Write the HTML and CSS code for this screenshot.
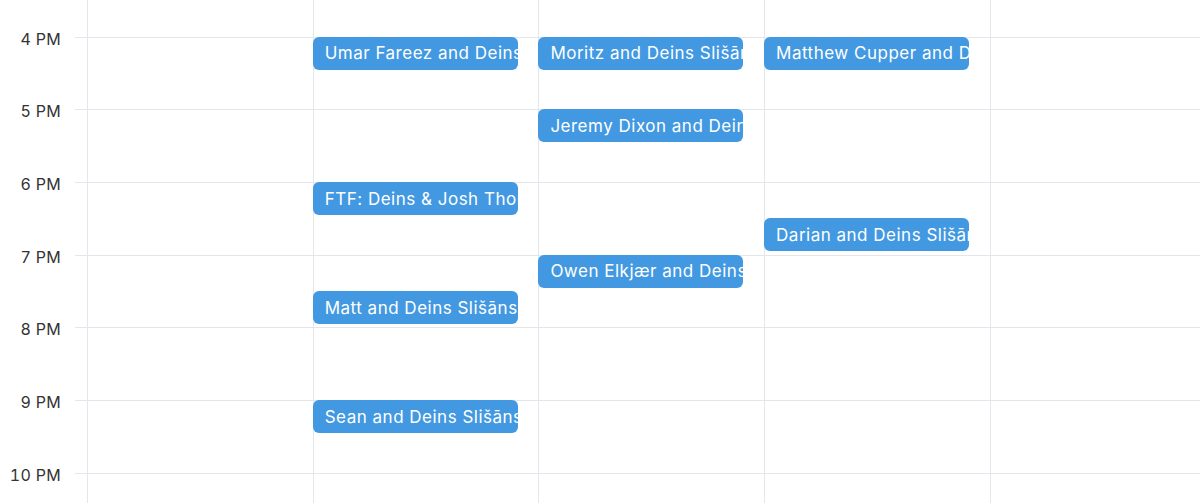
FILE: index.html
```html
<!DOCTYPE html>
<html lang="en">
<head>
    <meta charset="UTF-8">
    <meta name="viewport" content="width=device-width, initial-scale=1.0">
    <title>Week view</title>
    <link rel="stylesheet" href="styles.css">
</head>
<body>
    <div class="calendar">
        <div class="hours">
            <div class="hour"><span class="label">3 PM</span><span class="line"></span></div>
            <div class="hour"><span class="label">4 PM</span><span class="line"></span></div>
            <div class="hour"><span class="label">5 PM</span><span class="line"></span></div>
            <div class="hour"><span class="label">6 PM</span><span class="line"></span></div>
            <div class="hour"><span class="label">7 PM</span><span class="line"></span></div>
            <div class="hour"><span class="label">8 PM</span><span class="line"></span></div>
            <div class="hour"><span class="label">9 PM</span><span class="line"></span></div>
            <div class="hour"><span class="label">10 PM</span><span class="line"></span></div>
        </div>

        <div class="days">
            <div class="day"></div>
            <div class="day">
                <div class="event" style="top: 72.7px">Umar Fareez and Deins Slišāns</div>
                <div class="event" style="top: 218px">FTF: Deins &amp; Josh Thomas</div>
                <div class="event" style="top: 327px">Matt and Deins Slišāns</div>
                <div class="event" style="top: 436px">Sean and Deins Slišāns</div>
            </div>
            <div class="day">
                <div class="event" style="top: 72.7px">Moritz and Deins Slišāns</div>
                <div class="event" style="top: 145.3px">Jeremy Dixon and Deins Slišāns</div>
                <div class="event" style="top: 290.7px">Owen Elkjær and Deins Slišāns</div>
            </div>
            <div class="day">
                <div class="event" style="top: 72.7px">Matthew Cupper and Deins Slišāns</div>
                <div class="event" style="top: 254.3px">Darian and Deins Slišāns</div>
            </div>
            <div class="day"></div>
        </div>
    </div>
</body>
</html>
```

FILE: styles.css
```css
html, body {
    height: 100%;
}
body {
    margin: 0;
    padding: 0;
    overflow: hidden;
    background: #fff;
    font-family: Inter, "Noto Sans", sans-serif;
    color: #333;
}

/* the grid is scrolled so that 4 PM sits near the top */
.calendar {
    position: relative;
    height: 540px;
    margin-top: -36px;
    overflow: hidden;
}

.hour {
    display: flex;
    height: 72.7px;
}
.hour .label {
    width: 75px;
    box-sizing: border-box;
    padding-right: 14px;
    margin-top: -8px;
    text-align: right;
    font-size: 16px;
    line-height: 20px;
    letter-spacing: 0.3px;
    font-variant-numeric: tabular-nums;
}
.hour .line {
    flex: 1;
    border-top: 1px solid #e3e6ea;
}

.days {
    position: absolute;
    top: 0;
    bottom: 0;
    left: 87px;
    right: 0;
    display: grid;
    grid-template-columns: repeat(5, 225.7px);
}
.day {
    position: relative;
    border-left: 1px solid #e3e6ea;
}

/* events sit on the time axis, top comes from the start time */
.event {
    position: absolute;
    left: -1px;
    width: 205px;
    height: 33px;
    box-sizing: border-box;
    padding-left: 12px;
    display: flex;
    align-items: center;
    background: #4299e1;
    color: #fff;
    border-radius: 6px;
    font-size: 17px;
    letter-spacing: 0.5px;
    white-space: nowrap;
    overflow: hidden;
}
```
